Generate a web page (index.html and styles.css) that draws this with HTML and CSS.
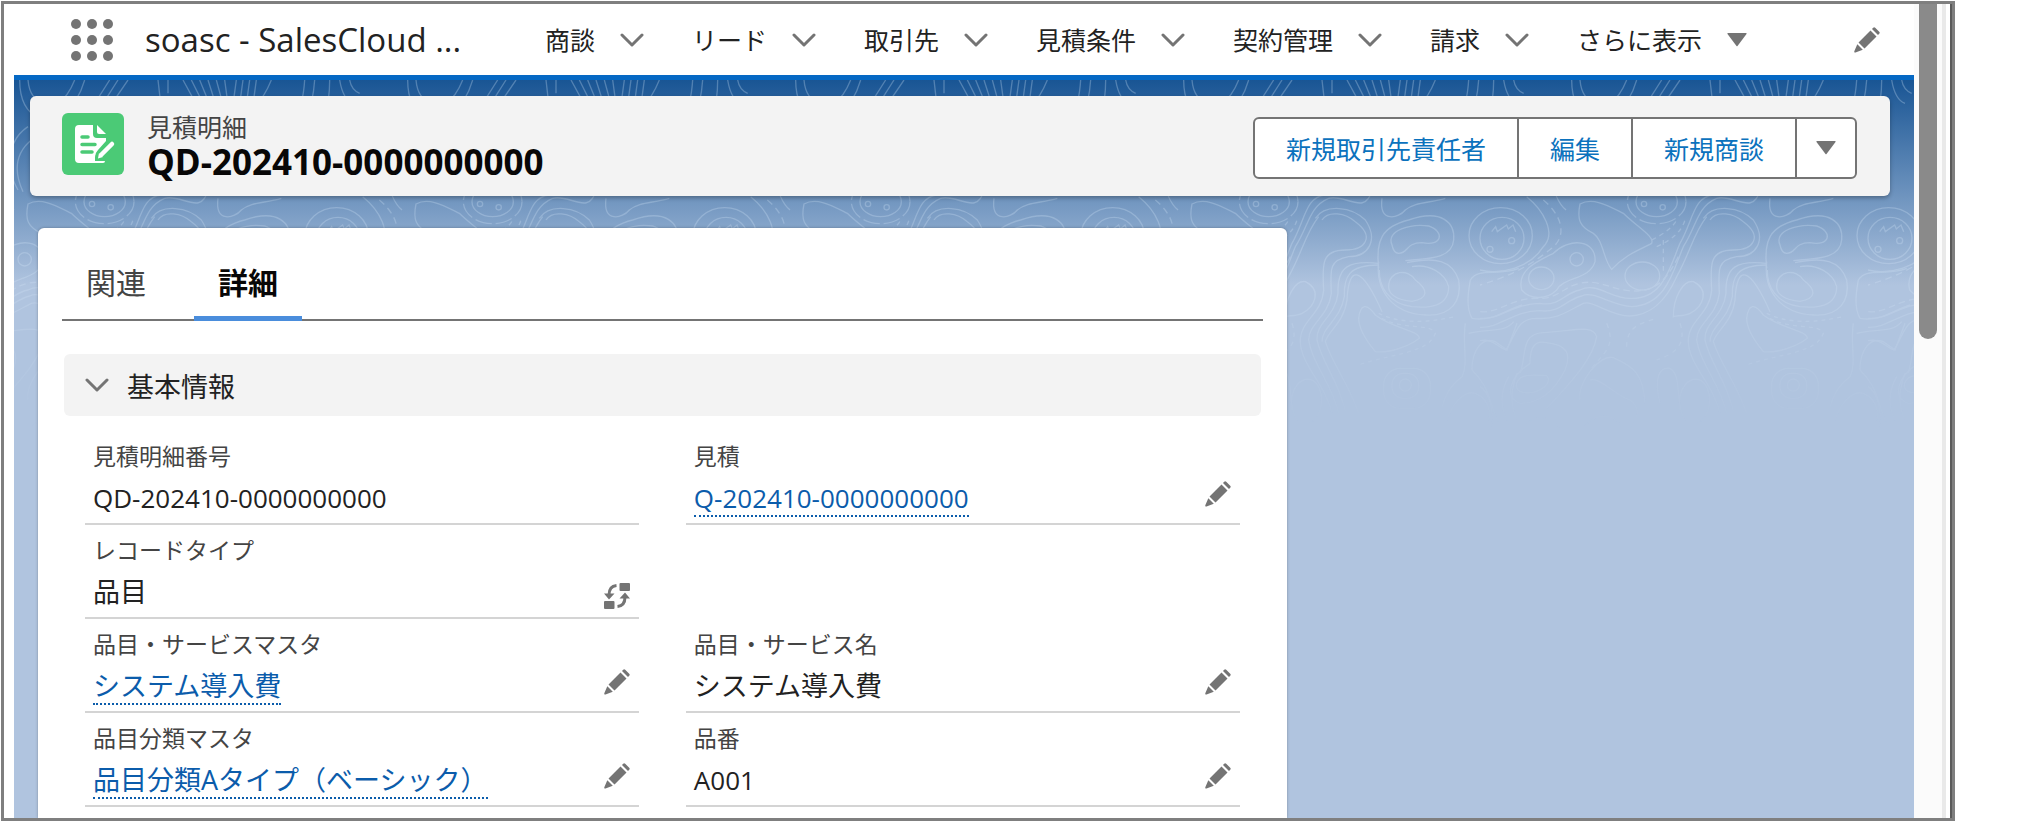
FILE: index.html
```html
<!DOCTYPE html>
<html lang="ja">
<head>
    <meta charset="UTF-8">
    <meta name="viewport" content="width=device-width, initial-scale=1.0">
    <title>QD-202410-0000000000 | 見積明細</title>
    <link rel="stylesheet" href="styles.css">
</head>
<body>
    <svg class="sprite" width="0" height="0" aria-hidden="true">
        <symbol id="chevron" viewBox="0 0 24 14">
            <path d="M2 2l10 10L22 2" fill="none" stroke="currentColor" stroke-width="3" stroke-linecap="round" stroke-linejoin="round"/>
        </symbol>
        <symbol id="triangle" viewBox="0 0 20 14">
            <path d="M1 0h18q1 0 .5 1l-9 12q-.5.6-1 0l-9-12Q0 0 1 0z" fill="currentColor"/>
        </symbol>
        <symbol id="pencil" viewBox="0 0 26 26">
            <path d="M4.500 15.500L16.500 3.500l6 6L10.500 21.500zM18 2l1.200-1.200q1-1 2 0l4 4q1 1 0 2L24 8zM3.300 17.200l5.500 5.500L1.500 25.500q-1.500.2-1.200-1.300z" fill="currentColor"/>
        </symbol>
        <symbol id="switch" viewBox="0 0 26 26">
            <rect x="15.500" y="0" width="10.500" height="8" rx="1" fill="currentColor"/>
            <rect x="0" y="18" width="10.500" height="8" rx="1" fill="currentColor"/>
            <path d="M12.500 2.500C7 3 5 7 5 12M13.500 23.500c5.500-.5 7.500-4.500 7.500-9.500" fill="none" stroke="currentColor" stroke-width="3"/>
            <path d="M0 10.500h10.500L5 16.500zM15.500 15.500h10.500L21 9.500z" fill="currentColor"/>
        </symbol>
    </svg>

    <div class="window">
        <div class="app">
            <header class="global-nav">
                <button class="icon-button waffle" aria-label="アプリケーションランチャー">
                    <svg viewBox="0 0 42 42" width="42" height="42" fill="#747474">
                        <circle cx="5" cy="5" r="5"/><circle cx="21" cy="5" r="5"/><circle cx="37" cy="5" r="5"/>
                        <circle cx="5" cy="21" r="5"/><circle cx="21" cy="21" r="5"/><circle cx="37" cy="21" r="5"/>
                        <circle cx="5" cy="37" r="5"/><circle cx="21" cy="37" r="5"/><circle cx="37" cy="37" r="5"/>
                    </svg>
                </button>
                <span class="app-name">soasc - SalesCloud ...</span>
                <nav class="nav-items">
                    <a href="#" class="nav-item">商談<svg class="chevron"><use href="#chevron"/></svg></a>
                    <a href="#" class="nav-item">リード<svg class="chevron"><use href="#chevron"/></svg></a>
                    <a href="#" class="nav-item">取引先<svg class="chevron"><use href="#chevron"/></svg></a>
                    <a href="#" class="nav-item">見積条件<svg class="chevron"><use href="#chevron"/></svg></a>
                    <a href="#" class="nav-item">契約管理<svg class="chevron"><use href="#chevron"/></svg></a>
                    <a href="#" class="nav-item">請求<svg class="chevron"><use href="#chevron"/></svg></a>
                    <button class="nav-item">さらに表示<svg class="triangle"><use href="#triangle"/></svg></button>
                </nav>
                <button class="icon-button nav-edit" aria-label="ナビゲーション項目を編集"><svg class="pencil"><use href="#pencil"/></svg></button>
            </header>

            <div class="workspace">
                <svg class="contours" width="100%" height="360" aria-hidden="true">
                    <defs>
                        <linearGradient id="fade" x1="0" y1="0" x2="0" y2="1">
                            <stop offset="0" stop-color="#fff" stop-opacity=".28"/>
                            <stop offset=".5" stop-color="#fff" stop-opacity=".24"/>
                            <stop offset=".97" stop-color="#fff" stop-opacity="0"/>
                        </linearGradient>
                        <mask id="fade-mask"><rect width="100%" height="360" fill="url(#fade)"/></mask>
                        <g id="tile" fill="none" stroke="#e0f0ff" stroke-width="4">
                            <!-- верхняя полоса -->
                            <path d="M275-330q0 90 60 115M300-330q5 60 50 70M440-330q-20 50-50 70M470-330q-20 70-70 110M545-330l-70 110M570-330l-70 110M600-330l-75 110M720-330v40M690-330l8 70M765-330l60 110M790-330l55 110M815-330l45 110M840-330l35 110M865-330l30 110M890-330l15 110M925-330l-15 110M945-330l-15 110M965-330l-15 110M985-330l-15 110M1030-330q-20 50-50 80"/>
                            <path d="M1130-330q-5 80-30 110M1160-330q-5 70-25 110M1205-330q0 60-15 110M1235-330q10 60 40 70M1265-330q5 30 30 40"/>
                            <path d="M270 0C230-70 240-150 300-190M285 5C255-60 262-110 310-150M258 60C210 20 205-80 220-180"/>
                            <!-- холмы -->
                            <ellipse cx="66" cy="145" rx="66" ry="63"/>
                            <ellipse cx="62" cy="137" rx="95" ry="84"/>
                            <path d="M35 125l12-15 5 15 28-20 5 12 14-12 8 20"/>
                            <circle cx="30" cy="178" r="9"/><circle cx="95" cy="152" r="9"/>
                            <path d="M140 20C190 60 230 130 190 170C150 235 60 255 0 240"/>
                            <path d="M190 30C250 80 260 140 215 175S120 250 0 285" stroke-dasharray="20 14"/>
                            <path d="M300 42C340 20 390 50 430 70C470 110 525 140 515 160C480 180 440 190 395 238C370 210 370 150 340 130C300 110 290 90 300 42z"/>
                            <ellipse cx="530" cy="35" rx="62" ry="45"/><ellipse cx="530" cy="35" rx="88" ry="66" stroke-dasharray="50 12"/>
                            <circle cx="492" cy="42" r="8"/><circle cx="548" cy="52" r="8"/>
                            <ellipse cx="487" cy="258" rx="52" ry="42"/>
                            <ellipse cx="184" cy="265" rx="38" ry="34"/><circle cx="290" cy="208" r="20"/>
                            <path d="M125 300C110 240 170 215 220 190C270 140 350 150 345 215C330 270 250 260 230 300C200 330 150 330 125 300z"/>
                            <path d="M515 150q60-30 75-60M530 170q70-30 85-80M550 150v100" stroke-dasharray="14 12"/>
                            <!-- волны -->
                            <path d="M700 15C640 20 640 90 600 160C570 230 550 330 450 325C390 325 350 275 300 300C250 310 240 350 180 340C100 340 60 390 0 385"/>
                            <path d="M840 0C820 80 760 10 710 25C650 50 650 110 610 170C580 240 560 345 455 350C390 345 340 300 305 318C255 330 240 370 180 362C100 362 60 415 0 412"/>
                            <path d="M595 200C560 270 530 300 470 303C400 305 360 265 300 280C250 290 230 330 170 325C90 325 60 370 0 365" stroke-dasharray="20 12"/>
                            <path d="M680 80C640 130 630 190 590 260C550 350 500 375 450 378C390 378 340 330 310 340C260 365 230 390 170 385C110 385 110 430 78 480C50 470 40 445 0 452"/>
                            <path d="M690 90C710 60 760 70 790 95C850 140 820 180 760 180C690 180 690 220 695 300C690 370 630 390 625 445C620 520 700 580 720 670"/>
                            <path d="M670 85C700 40 780 50 820 90C860 150 830 200 770 200C710 210 715 240 718 310C710 380 650 400 650 450C660 520 720 580 740 670"/>
                            <path d="M860 220C770 210 735 230 738 310C730 380 670 400 675 450C690 520 740 570 760 665M860 225C770 225 755 260 757 320C745 390 690 410 690 455"/>
                            <path d="M870 365C810 230 770 220 765 330C755 400 710 420 700 455C720 520 770 580 800 670"/>
                            <!-- правая часть -->
                            <path d="M900 165C880 120 960 100 1010 108C1060 125 1050 170 990 158C940 158 950 190 920 190q-15 0-20-25z"/>
                            <path d="M860 235C850 150 870 110 950 90C1050 55 1090 100 1085 150C1080 210 1000 205 940 212"/>
                            <path d="M870 25C860 100 920 85 940 60C970 35 1010 40 1060 25"/>
                            <path d="M890 290C890 240 950 235 970 270C1010 300 1010 325 960 334C910 330 890 310 890 290z"/>
                            <path d="M860 215C850 300 900 370 1000 375C1080 380 1110 330 1100 270C1080 210 1030 200 945 218"/>
                            <path d="M960 230C1010 220 1060 250 1070 290C1070 350 1010 355 960 350C890 340 860 290 862 240"/>
                            <path d="M800 385C805 340 825 340 850 375C900 415 980 420 982 445C950 470 890 490 850 485C825 455 800 420 800 385z"/>
                            <path d="M860 370C920 400 1000 400 1090 380M870 385C930 420 1020 400 1030 430C1010 490 900 490 800 525" stroke-dasharray="12 12"/>
                            <path d="M1140 385C1120 350 1130 300 1135 270C1160 230 1220 260 1280 235M1140 385C1200 395 1230 365 1290 345M1130 430C1180 415 1240 430 1265 395"/>
                            <path d="M580 380C580 320 610 270 640 275C690 300 670 350 630 370C610 380 590 375 580 380z"/>
                            <path d="M1120 400C1110 460 1130 520 1110 560C1070 590 1060 620 1050 650"/>
                            <!-- низ -->
                            <path d="M150 520C150 470 165 450 200 458C260 465 275 490 255 540C230 590 190 640 120 640C70 620 90 560 150 520z"/>
                            <path d="M110 580C120 550 160 555 200 557C220 580 180 605 150 608C120 610 105 600 110 580z"/>
                            <path d="M120 550C140 500 120 430 190 428C270 425 340 400 350 440C340 500 290 560 200 655"/>
                            <path d="M300 630C290 580 360 490 400 503C460 530 490 550 495 640M330 570C360 560 410 620 450 630C480 650 480 690 440 720"/>
                            <path d="M540 640C520 560 540 530 570 535C610 560 580 640 620 700M600 660C590 590 630 560 660 570C700 590 700 680 650 700"/>
                            <rect x="875" y="535" width="140" height="120" rx="50"/><rect x="900" y="550" width="80" height="75" rx="34"/><circle cx="940" cy="585" r="18"/>
                            <path d="M1060 720C1070 640 1120 600 1150 610C1200 630 1200 690 1180 720M1140 540C1140 480 1170 440 1210 455L1245 480L1275 400M1140 540C1200 600 1190 640 1220 700M1250 560q-40 70 0 140M1275 550q-30 80 0 140"/>
                            <path d="M30 720C50 660 20 600 0 590M110 740C120 680 220 660 240 720M300 740C320 660 420 660 430 730"/>
                            <path d="M440 470C440 410 480 400 530 385M600 400C620 460 590 490 530 510M380 400C410 470 370 490 330 540" stroke-dasharray="14 14"/>
                        </g>
                        <pattern id="contour-pattern" width="388" height="360" patternUnits="userSpaceOnUse" viewBox="0 0 1164 1080">
                            <use href="#tile" transform="translate(-258 330)"/>
                            <use href="#tile" transform="translate(906 330)"/>
                        </pattern>
                    </defs>
                    <rect width="100%" height="360" fill="url(#contour-pattern)" mask="url(#fade-mask)"/>
                </svg>

                <section class="record-header">
                    <svg class="record-icon" viewBox="0 0 62 62" width="62" height="62">
                        <rect width="62" height="62" rx="6" fill="#4bca76"/>
                        <path d="M17 12h14v9q0 4 4 4h9v3L36 37q-3 3-3 7v4h10q0 2-2 2H17q-4 0-4-4V16q0-4 4-4z" fill="#fff"/>
                        <path d="M35 12l9 9h-7q-2 0-2-2z" fill="#fff"/>
                        <path d="M20 24h6M20 31.500h13M20 39h10" stroke="#4bca76" stroke-width="3.500" stroke-linecap="round"/>
                        <path d="M50 31l-11 11-1.500 3" stroke="#4bca76" stroke-width="9" fill="none"/>
                        <path d="M50 31L39.500 41.500" stroke="#fff" stroke-width="4.500" stroke-linecap="round"/>
                        <path d="M37 40l4 4-5 1.500z" fill="#fff"/>
                    </svg>
                    <div class="record-heading">
                        <div class="record-type">見積明細</div>
                        <h1>QD-202410-0000000000</h1>
                    </div>
                    <div class="button-group">
                        <button>新規取引先責任者</button>
                        <button>編集</button>
                        <button>新規商談</button>
                        <button class="more" aria-label="その他のアクション"><svg class="triangle"><use href="#triangle"/></svg></button>
                    </div>
                </section>

                <main class="columns">
                    <section class="card">
                        <div class="tabs" role="tablist">
                            <button class="tab" role="tab" aria-selected="false">関連</button>
                            <button class="tab active" role="tab" aria-selected="true">詳細</button>
                        </div>
                        <div class="section">
                            <button class="section-title"><svg class="chevron"><use href="#chevron"/></svg>基本情報</button>
                        </div>
                        <div class="fields">
                            <div class="field">
                                <div class="label">見積明細番号</div>
                                <div class="value latin"><span>QD-202410-0000000000</span></div>
                            </div>
                            <div class="field">
                                <div class="label">見積</div>
                                <div class="value latin">
                                    <a href="#">Q-202410-0000000000</a>
                                    <button class="icon-button" aria-label="見積を編集"><svg class="pencil"><use href="#pencil"/></svg></button>
                                </div>
                            </div>
                            <div class="field">
                                <div class="label">レコードタイプ</div>
                                <div class="value">
                                    <span>品目</span>
                                    <button class="icon-button record-switch" aria-label="レコードタイプを変更"><svg class="pencil"><use href="#switch"/></svg></button>
                                </div>
                            </div>
                            <div class="field empty"></div>
                            <div class="field">
                                <div class="label">品目・サービスマスタ</div>
                                <div class="value">
                                    <a href="#">システム導入費</a>
                                    <button class="icon-button" aria-label="品目・サービスマスタを編集"><svg class="pencil"><use href="#pencil"/></svg></button>
                                </div>
                            </div>
                            <div class="field">
                                <div class="label">品目・サービス名</div>
                                <div class="value">
                                    <span>システム導入費</span>
                                    <button class="icon-button" aria-label="品目・サービス名を編集"><svg class="pencil"><use href="#pencil"/></svg></button>
                                </div>
                            </div>
                            <div class="field">
                                <div class="label">品目分類マスタ</div>
                                <div class="value">
                                    <a href="#">品目分類Aタイプ（ベーシック）</a>
                                    <button class="icon-button" aria-label="品目分類マスタを編集"><svg class="pencil"><use href="#pencil"/></svg></button>
                                </div>
                            </div>
                            <div class="field">
                                <div class="label">品番</div>
                                <div class="value latin">
                                    <span>A001</span>
                                    <button class="icon-button" aria-label="品番を編集"><svg class="pencil"><use href="#pencil"/></svg></button>
                                </div>
                            </div>
                        </div>
                    </section>
                </main>
            </div>
        </div>
        <div class="scrollbar"><div class="thumb"></div></div>
    </div>
</body>
</html>
```
FILE: styles.css
```css
* {
    box-sizing: border-box;
}
body {
    margin: 0;
    background: #fff;
    color: #222;
    font-family: "Open Sans", "Noto Sans CJK JP", sans-serif;
    overflow: hidden;
}
button {
    font-family: inherit;
    color: inherit;
    background: none;
    border: none;
    padding: 0;
    cursor: pointer;
}
a {
    color: inherit;
    text-decoration: none;
}
svg {
    display: block;
    flex: none;
}
.sprite {
    position: absolute;
}
.window {
    display: flex;
    height: calc(100vh - 6px);
    margin: 1px 72px 5px 1px;
    padding-left: 10px;
    border: 3px solid #7f7f7f;
    overflow: hidden;
}
.app {
    display: flex;
    flex-direction: column;
    flex: 1;
    min-width: 0;
}
.icon-button {
    color: #747474;
}
.chevron {
    width: 24px;
    height: 14px;
    color: #747474;
}
.triangle {
    width: 20px;
    height: 14px;
    color: #747474;
}
.pencil {
    width: 26px;
    height: 26px;
}

/* Навигация */
.global-nav {
    display: flex;
    align-items: center;
    flex: none;
    height: 76px;
    padding: 0 34px 0 57px;
    border-bottom: 5px solid #0568c4;
}
.app-name {
    flex: 0 0 400px;
    margin-left: 32px;
    font-size: 33px;
    line-height: 40px;
    white-space: nowrap;
}
.nav-items {
    display: flex;
    gap: 48px;
}
.nav-item {
    display: flex;
    align-items: center;
    gap: 25px;
    font-size: 25px;
    line-height: 36px;
    white-space: nowrap;
}
.nav-edit {
    margin-left: auto;
}

/* Рабочая область */
.workspace {
    position: relative;
    flex: 1;
    display: flex;
    flex-direction: column;
    min-height: 0;
    background: linear-gradient(#195594, #b0c4df 205px);
}
.contours {
    position: absolute;
    top: 0;
    left: 0;
}
.record-header {
    position: relative;
    display: flex;
    gap: 23px;
    margin: 16px 24px 0 16px;
    padding: 17px 33px 13px 32px;
    background: #f3f3f3;
    border-radius: 6px;
    box-shadow: 0 2px 4px rgba(0, 0, 0, 0.3);
}
.record-type {
    font-size: 25px;
    line-height: 28px;
    color: #444;
}
h1 {
    margin: 0;
    font-size: 35px;
    line-height: 42px;
    font-weight: 700;
    color: #080707;
}
.button-group {
    display: flex;
    height: 62px;
    margin: 4px 0 0 auto;
    background: #fff;
    border: 2px solid #747474;
    border-radius: 6px;
}
.button-group button {
    padding: 0 31px;
    font-size: 25px;
    color: #0b72bd;
    white-space: nowrap;
}
.button-group button + button {
    border-left: 2px solid #747474;
}
.button-group .more {
    padding: 0 19px;
}

/* Карточка */
.columns {
    position: relative;
    flex: 1;
    display: grid;
    grid-template-columns: 2fr 1fr;
    gap: 3px;
    margin-top: 32px;
    padding-left: 24px;
}
.card {
    padding: 0 24px;
    background: #fff;
    border-radius: 6px 6px 0 0;
    box-shadow: 0 0 3px rgba(0, 0, 0, 0.3);
}
.tabs {
    display: flex;
    gap: 24px;
    padding-top: 37px;
    border-bottom: 2px solid #747474;
}
.tab {
    margin-bottom: -2px;
    padding: 0 24px 15px;
    border-bottom: 5px solid transparent;
    font-size: 30px;
    line-height: 36px;
    color: #444;
}
.tab.active {
    border-color: #4a8ddc;
    font-weight: 700;
    color: #080707;
}
.section {
    padding: 33px 2px 0;
}
.section-title {
    display: flex;
    align-items: center;
    gap: 18px;
    width: 100%;
    height: 62px;
    padding-left: 21px;
    background: #f3f3f3;
    border-radius: 6px;
    font-size: 27px;
}
.fields {
    display: grid;
    grid-template-columns: 1fr 1fr;
    column-gap: 47px;
    padding: 15px 23px 0;
}
.field {
    height: 94px;
    padding: 10px 9px 0 8px;
    border-bottom: 2px solid #d4d4d4;
}
.field.empty {
    border: none;
}
.label {
    font-size: 23px;
    line-height: 30px;
    color: #444;
}
.value {
    display: flex;
    align-items: flex-start;
    justify-content: space-between;
    margin-top: 10px;
    font-size: 27px;
    line-height: 34px;
}
.value.latin {
    font-size: 26px;
}
.value a {
    color: #0b5cab;
    border-bottom: 2px dotted #0b5cab;
}
.record-switch {
    align-self: flex-end;
}

/* Полоса прокрутки */
.scrollbar {
    flex: 0 0 38px;
    padding-left: 5px;
    background: linear-gradient(to right, #fbfbfb 28px, #e9e9e9 28px, #e9e9e9 32px, #fff 32px, #fff 36px, #5a5a5a 36px);
}
.thumb {
    width: 18px;
    height: 335px;
    background: #8a8a8a;
    border-radius: 0 0 9px 9px;
}
```
